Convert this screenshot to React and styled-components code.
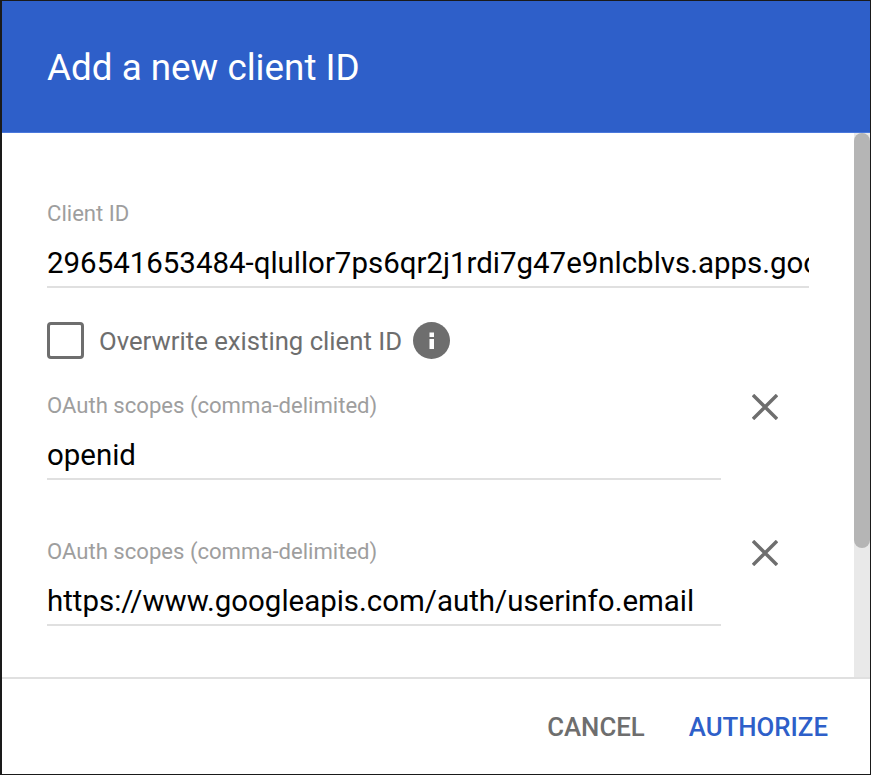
import React from 'react';
import styled, { createGlobalStyle } from 'styled-components';

const GlobalStyle = createGlobalStyle`
  html, body {
    margin: 0;
    padding: 0;
    background: #fff;
  }
`;

const Dialog = styled.div`
  box-sizing: border-box;
  width: 871px;
  height: 775px;
  display: flex;
  flex-direction: column;
  background: #fff;
  border-style: solid;
  border-color: #1a1a1a;
  border-width: 1px 1px 1px 2px;
  font-family: Roboto, sans-serif;
  overflow: hidden;
`;

const Header = styled.header`
  flex: none;
  height: 132px;
  display: flex;
  align-items: center;
  padding: 2px 45px 0;
  background: #2e5fc9;
  border-bottom: 1px solid #4a78dc;
  box-sizing: border-box;
`;

const Title = styled.h1`
  margin: 0;
  font-size: 36.8px;
  font-weight: 400;
  color: #fff;
`;

const Middle = styled.div`
  flex: 1;
  min-height: 0;
  display: flex;
`;

const Content = styled.main`
  flex: 1;
  min-width: 0;
  padding: 68px 45px 0;
  display: flex;
  flex-direction: column;
  box-sizing: border-box;
`;

const Track = styled.div`
  flex: none;
  width: 16px;
  background: #e9e9e9;
`;

const Thumb = styled.div`
  height: 415px;
  background: #b5b5b5;
  border-radius: 8px;
`;

const Field = styled.div`
  width: ${(p) => p.$width}px;
`;

const Label = styled.div`
  font-size: 22.1px;
  line-height: 25px;
  color: #9e9e9e;
`;

const Value = styled.div`
  margin-top: 19px;
  font-size: 29.45px;
  line-height: 36px;
  color: #000;
  white-space: nowrap;
  overflow: hidden;
  padding-bottom: 5px;
  border-bottom: 2px solid #e0e0e0;
`;

const CheckRow = styled.div`
  display: flex;
  align-items: center;
  margin-top: 34px;
  height: 37px;
`;

const CheckBox = styled.div`
  box-sizing: border-box;
  width: 37px;
  height: 37px;
  border: 3px solid #6e6e6e;
  border-radius: 4px;
`;

const CheckLabel = styled.span`
  margin-left: 15px;
  font-size: 25.7px;
  color: #6e6e6e;
`;

const InfoIcon = styled.svg`
  margin-left: 11px;
  width: 37px;
  height: 37px;
`;

const ScopeRow = styled.div`
  display: flex;
  align-items: flex-start;
  margin-top: ${(p) => p.$top}px;
`;

const RemoveButton = styled.button`
  margin: 1px 0 0 31px;
  padding: 0;
  width: 26px;
  height: 26px;
  border: 0;
  background: none;
  display: flex;
`;

const Footer = styled.footer`
  flex: none;
  height: 97px;
  box-sizing: border-box;
  border-top: 2px solid #e0e0e0;
  display: flex;
  align-items: center;
  justify-content: flex-end;
  gap: 44px;
  padding: 0 42px 0 0;
`;

const ActionButton = styled.button`
  padding: 0;
  border: 0;
  background: none;
  font-family: inherit;
  font-size: 25.8px;
  font-weight: 500;
  color: ${(p) => (p.$primary ? '#2e5fc9' : '#6e6e6e')};
`;

const CloseIcon = () => (
  <svg width="26" height="26" viewBox="0 0 26 26" fill="none" stroke="#6e6e6e" strokeWidth="3.400">
    <path d="M1 1L25 25M25 1L1 25" />
  </svg>
);

const scopes = [
  { value: 'openid', top: 34 },
  { value: 'https://www.googleapis.com/auth/userinfo.email', top: 59 },
];

export default function App() {
  return (
    <Dialog>
      <GlobalStyle />
      <Header>
        <Title>Add a new client ID</Title>
      </Header>
      <Middle>
        <Content>
          <Field $width={762}>
            <Label>Client ID</Label>
            <Value>296541653484-qlullor7ps6qr2j1rdi7g47e9nlcblvs.apps.googleusercontent.com</Value>
          </Field>
          <CheckRow>
            <CheckBox />
            <CheckLabel>Overwrite existing client ID</CheckLabel>
            <InfoIcon viewBox="0 0 37 37">
              <circle cx="18.500" cy="18.500" r="18.500" fill="#6e6e6e" />
              <rect x="16.500" y="17" width="4.500" height="10" fill="#fff" />
              <rect x="16.500" y="10.500" width="4.500" height="4.500" fill="#fff" />
            </InfoIcon>
          </CheckRow>
          {scopes.map((scope) => (
            <ScopeRow key={scope.value} $top={scope.top}>
              <Field $width={674}>
                <Label>OAuth scopes (comma-delimited)</Label>
                <Value>{scope.value}</Value>
              </Field>
              <RemoveButton aria-label="Remove scope">
                <CloseIcon />
              </RemoveButton>
            </ScopeRow>
          ))}
        </Content>
        <Track>
          <Thumb />
        </Track>
      </Middle>
      <Footer>
        <ActionButton>CANCEL</ActionButton>
        <ActionButton $primary>AUTHORIZE</ActionButton>
      </Footer>
    </Dialog>
  );
}
